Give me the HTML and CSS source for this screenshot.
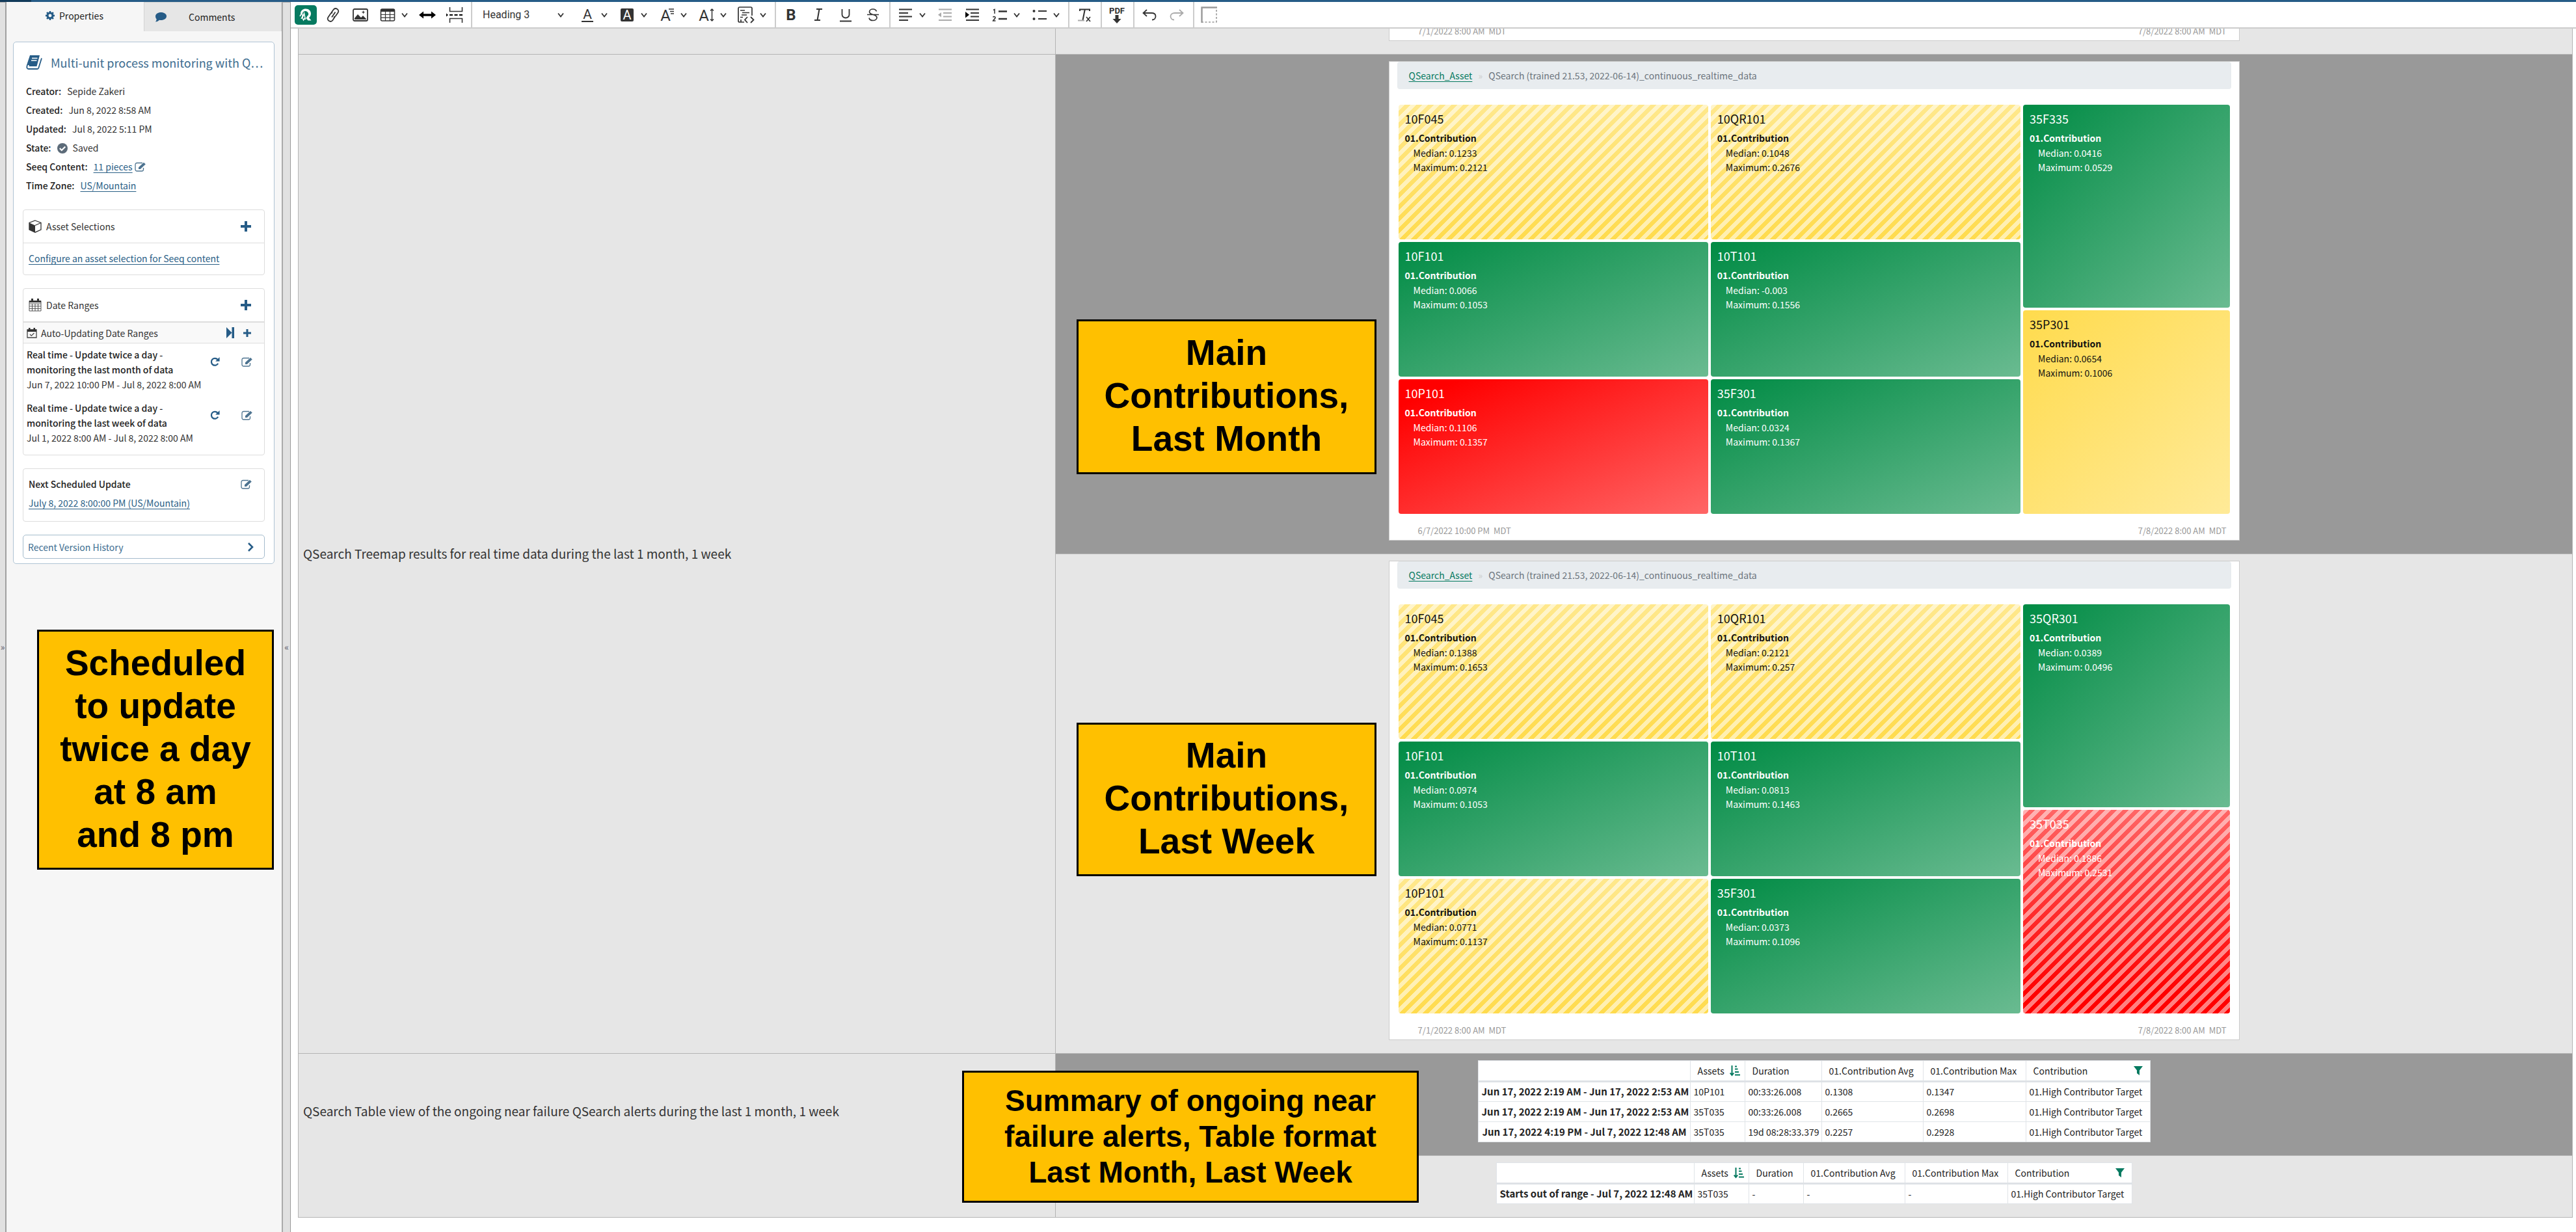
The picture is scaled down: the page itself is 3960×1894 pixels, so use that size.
FILE: index.html
```html
<!DOCTYPE html>
<html lang="en">
<head>
<meta charset="utf-8">
<title>Multi-unit process monitoring</title>
<link rel="stylesheet" href="styles.css">
</head>
<body>
<svg class="sprite" aria-hidden="true">
  <symbol id="chev" viewBox="0 0 10 8"><path d="M1 1.500l4 5 4-5" fill="none" stroke="currentColor" stroke-width="1.800"/></symbol>
  <symbol id="plus" viewBox="0 0 16 16"><path d="M6 0h4v6h6v4h-6v6H6v-6H0V6h6z" fill="currentColor"/></symbol>
  <symbol id="edit" viewBox="0 0 18 15"><path d="M12 1.500H3.500a2.500 2.500 0 0 0-2.500 2.500v7.500A2.500 2.500 0 0 0 3.500 14H11a2.500 2.500 0 0 0 2.500-2.500V9" fill="none" stroke="currentColor" stroke-width="1.300"/><path d="M6 11V8.200L14 .8l2.800 2.600L8.800 11z" fill="currentColor"/></symbol>
  <symbol id="redo-s" viewBox="0 0 16 16"><path d="M13 10.500A5.800 5.800 0 1 1 12.300 4" fill="none" stroke="currentColor" stroke-width="2.400"/><path d="M15.500 0v7H8.700z" fill="currentColor"/></symbol>
  <symbol id="sort" viewBox="0 0 17 17"><path d="M3.500 0v14M.7 11.500l2.800 3.500 2.800-3.500M8 1.500h3M8 5.500h4.500M8 10h6M8 14.500h8" fill="none" stroke="currentColor" stroke-width="2"/></symbol>
  <symbol id="filter" viewBox="0 0 14 14"><path d="M0 0h14L9 6.500V14l-4-3V6.500z" fill="currentColor"/></symbol>
</svg>

<div class="topbar"></div>
<div class="app">
  <div class="gutter gutter-left"><span>»</span></div>

  <aside class="sidebar">
    <div class="tabs">
      <button class="tab tab-active" type="button">
        <svg width="14" height="14" viewBox="0 0 16 16"><path fill="currentColor" fill-rule="evenodd" d="M6.700 0h2.600l.4 2.100 1.300.6 1.800-1.200 1.800 1.800L13.400 5l.5 1.300 2.100.4v2.600l-2.100.4-.5 1.300 1.200 1.800-1.800 1.800L11 13.400l-1.300.5-.4 2.100H6.700l-.4-2.100L5 13.400l-1.800 1.200-1.800-1.800L2.600 11l-.5-1.300L0 9.300V6.700l2.100-.4L2.600 5 1.400 3.200l1.800-1.800L5 2.700l1.300-.6zM8 5.200a2.800 2.800 0 1 0 0 5.600 2.800 2.800 0 0 0 0-5.600z"/></svg>
        <span>Properties</span>
      </button>
      <button class="tab tab-idle" type="button">
        <svg width="18" height="15" viewBox="0 0 18 15"><path fill="currentColor" d="M9.500 0C14.200 0 18 2.600 18 6s-3.800 6-8.500 6c-.9 0-1.700-.1-2.500-.3C5.500 13.200 3.500 14.300 1 14.500c1-1.200 1.600-2.600 1.700-4C1.600 9.300 1 7.800 1 6c0-3.400 3.800-6 8.500-6z"/></svg>
        <span>Comments</span>
      </button>
    </div>

    <section class="card">
      <h1 class="doc-title">
        <svg width="25" height="24" viewBox="0 0 25 24"><path d="M7 1h14l-4.500 17H4.500" fill="currentColor"/><path d="M7 1L1.500 17.500c-.6 3 .5 4.500 2.500 4.500h13.500c1 0 1.500-.5 1.800-1.500L24 5.500" fill="none" stroke="currentColor" stroke-width="1.800"/><path d="M7 1L2.500 16h3z" fill="currentColor"/><path d="M9 5.500h8.500M8 9h8.500" stroke="#fff" stroke-width="1.500"/></svg>
        <span>Multi-unit process monitoring with Q…</span>
      </h1>
      <dl class="facts">
        <div><dt>Creator:</dt><dd>Sepide Zakeri</dd></div>
        <div><dt>Created:</dt><dd>Jun 8, 2022 8:58 AM</dd></div>
        <div><dt>Updated:</dt><dd>Jul 8, 2022 5:11 PM</dd></div>
        <div><dt>State:</dt><dd><svg class="state" width="16" height="16" viewBox="0 0 16 16"><circle cx="8" cy="8" r="8" fill="#5c6b79"/><path d="M3.800 8l3 3 5.500-5.500" fill="none" stroke="#fff" stroke-width="2.200"/></svg>Saved</dd></div>
        <div><dt>Seeq Content:</dt><dd><a href="#">11 pieces</a><svg class="edit" width="18" height="15"><use href="#edit"/></svg></dd></div>
        <div><dt>Time Zone:</dt><dd><a href="#">US/Mountain</a></dd></div>
      </dl>

      <section class="box">
        <header class="box-head">
          <svg width="20" height="20" viewBox="0 0 20 20"><path d="M10 1l9 3.500V15l-9 4.200L1 15V4.500z" fill="#fff" stroke="#333" stroke-width="1.300"/><path d="M1 4.500L10 8.500v10.700L1 15z" fill="#333"/><path d="M10 8.500l9-4" stroke="#333" stroke-width="1.200"/></svg>
          <h2>Asset Selections</h2>
          <button class="icon-btn" type="button" aria-label="Add asset selection"><svg width="16" height="16"><use href="#plus"/></svg></button>
        </header>
        <div class="box-body"><a href="#">Configure an asset selection for Seeq content</a></div>
      </section>

      <section class="box">
        <header class="box-head">
          <svg width="20" height="20" viewBox="0 0 20 20"><path d="M1 3.500h18V19H1zM1 8h18M1 11.700h18M1 15.400h18M5.500 8v11M10 8v11M14.500 8v11" fill="none" stroke="#555" stroke-width="1"/><path d="M1 3.500h18V6H1zM4 0h3v5H4zM13 0h3v5h-3z" fill="#333"/></svg>
          <h2>Date Ranges</h2>
          <button class="icon-btn" type="button" aria-label="Add date range"><svg width="16" height="16"><use href="#plus"/></svg></button>
        </header>
        <div class="sub-head">
          <svg width="16" height="16" viewBox="0 0 16 16"><path d="M1 3h14v12H1z" fill="none" stroke="#444" stroke-width="1.300"/><path d="M1 2.500h14V6H1zM3 0h2.500v4H3zM10.500 0H13v4h-2.500z" fill="#333"/><path d="M5 10l2.300 2.200L11.500 8" fill="none" stroke="#444" stroke-width="1.200"/></svg>
          <h3>Auto-Updating Date Ranges</h3>
          <button class="icon-btn" type="button" aria-label="Step to now"><svg width="12" height="17" viewBox="0 0 12 17"><path d="M0 0l8.500 8.500L0 17zM8.500 0H12v17H8.500z" fill="currentColor"/></svg></button>
          <button class="icon-btn" type="button" aria-label="Add auto-updating range"><svg width="12" height="12"><use href="#plus"/></svg></button>
        </div>
        <ul class="ranges">
          <li>
            <div><strong>Real time - Update twice a day -<br>monitoring the last month of data</strong><span>Jun 7, 2022 10:00 PM - Jul 8, 2022 8:00 AM</span></div>
            <button class="icon-btn refresh" type="button" aria-label="Refresh"><svg width="15" height="15"><use href="#redo-s"/></svg></button>
            <button class="icon-btn" type="button" aria-label="Edit"><svg class="edit" width="18" height="15"><use href="#edit"/></svg></button>
          </li>
          <li>
            <div><strong>Real time - Update twice a day -<br>monitoring the last week of data</strong><span>Jul 1, 2022 8:00 AM - Jul 8, 2022 8:00 AM</span></div>
            <button class="icon-btn refresh" type="button" aria-label="Refresh"><svg width="15" height="15"><use href="#redo-s"/></svg></button>
            <button class="icon-btn" type="button" aria-label="Edit"><svg class="edit" width="18" height="15"><use href="#edit"/></svg></button>
          </li>
        </ul>
      </section>

      <section class="box next">
        <div><strong>Next Scheduled Update</strong><button class="icon-btn" type="button" aria-label="Edit schedule"><svg class="edit" width="18" height="15"><use href="#edit"/></svg></button></div>
        <a href="#">July 8, 2022 8:00:00 PM (US/Mountain)</a>
      </section>

      <button class="history" type="button"><span>Recent Version History</span><svg width="9" height="14" viewBox="0 0 9 14"><path d="M1 1l6 6-6 6" fill="none" stroke="currentColor" stroke-width="2.600"/></svg></button>
    </section>
  </aside>

  <div class="gutter gutter-mid"><span>«</span></div>

  <main class="main">
    <div class="toolbar">
      <div class="group">
        <button class="tool" type="button" aria-label="Insert Seeq content"><svg width="34" height="30" viewBox="0 0 34 30"><rect width="34" height="30" rx="5" fill="#067a60"/><path d="M9 13c0-5 4-7.500 8-7.500 5 0 8 3.500 8 7.500 0 3-1.500 5-3 6.200l3.500 4.300h-5l-3-3.500 2-3.500c1.500-1 2-2 1.500-4-.7-2-2.500-3.500-4.500-3.500-2.500 0-4 1.500-4.500 3.500z" fill="#fff"/><path d="M8 17l3-5 1.500 6 2-5.500 2 9.500M10 21l1.500-3 2 5 2-3" fill="none" stroke="#fff" stroke-width="1.500"/></svg></button>
        <button class="tool" type="button" aria-label="Link"><svg width="24" height="24" viewBox="0 0 24 24"><path d="M10 15.500l5.500-8M9 9l3.500-5c1.500-2 4-2.300 6-1s2.300 3.800 1 5.500l-3.500 5c-1 1.300-2 1.800-3.200 1.800M15 14.500L11.500 20c-1.500 2-4 2.300-6 1s-2.300-3.800-1-5.500L8 10.300c1-1.300 2-1.800 3.200-1.800" fill="none" stroke="currentColor" stroke-width="1.800"/></svg></button>
        <button class="tool" type="button" aria-label="Image"><svg width="24" height="20" viewBox="0 0 24 20"><rect x="1" y="1" width="22" height="18" rx="2" fill="none" stroke="currentColor" stroke-width="1.800"/><path d="M3 17V15l5-6 5 5 3-3 5 5v1zM16.500 3l.8 2 2 .8-2 .8-.8 2-.8-2-2-.8 2-.8z" fill="currentColor"/></svg></button>
        <button class="tool drop" type="button" aria-label="Table"><svg width="24" height="20" viewBox="0 0 24 20"><rect x="1.500" y="1" width="21" height="18" rx="2" fill="none" stroke="currentColor" stroke-width="1.600"/><path d="M2 1h20v4H2z" fill="currentColor"/><path d="M2 9.500h20M2 14.200h20M8.500 5v14M15.500 5v14" stroke="currentColor" stroke-width="1.200"/></svg><svg class="chev"><use href="#chev"/></svg></button>
        <button class="tool" type="button" aria-label="Width"><svg width="26" height="12" viewBox="0 0 26 12"><path d="M0 6l7-5.500v3.700h12V.5L26 6l-7 5.500V7.800H7v3.700z" fill="#000"/></svg></button>
        <button class="tool" type="button" aria-label="Page break"><svg width="26" height="24" viewBox="0 0 26 24"><path d="M5.500 0v6.500h19V0M5.500 24v-6.500h19V24" fill="none" stroke="currentColor" stroke-width="1.600"/><path d="M5 12h5M12.500 12h5M20 12h5" stroke="#000" stroke-width="2.200"/><path d="M0 9.500l3 2.500-3 2.500z" fill="#000"/></svg></button>
      </div>
      <div class="group">
        <label class="style-pick"><select aria-label="Paragraph format"><option>Heading 3</option></select><svg class="chev"><use href="#chev"/></svg></label>
        <button class="tool drop" type="button" aria-label="Text color"><svg width="24" height="24" viewBox="0 0 24 24"><text class="glyph" x="12" y="18" font-size="21">A</text><path d="M3 22h18" stroke="currentColor" stroke-width="2"/></svg><svg class="chev"><use href="#chev"/></svg></button>
        <button class="tool drop" type="button" aria-label="Background color"><svg width="24" height="24" viewBox="0 0 24 24"><rect x="2" y="2" width="20" height="20" rx="2" fill="currentColor"/><text class="glyph light" x="12" y="19" font-size="20">A</text></svg><svg class="chev"><use href="#chev"/></svg></button>
        <button class="tool drop" type="button" aria-label="Font family"><svg width="24" height="24" viewBox="0 0 24 24"><text class="glyph" x="10" y="21" font-size="24">A</text><path d="M15 3h8M17 6.500h6M18 10h5" stroke="currentColor" stroke-width="1.600"/></svg><svg class="chev"><use href="#chev"/></svg></button>
        <button class="tool drop" type="button" aria-label="Font size"><svg width="26" height="24" viewBox="0 0 26 24"><text class="glyph" x="9" y="21" font-size="24">A</text><path d="M21.500 3v18M19 5.500L21.500 3 24 5.500M19 18.500l2.500 2.500 2.500-2.500" fill="none" stroke="currentColor" stroke-width="1.500"/></svg><svg class="chev"><use href="#chev"/></svg></button>
        <button class="tool drop" type="button" aria-label="Code"><svg width="26" height="26" viewBox="0 0 26 26"><path d="M10 24H3a2 2 0 0 1-2-2M1 22V3a2 2 0 0 1 2-2h17a2 2 0 0 1 2 2v11M5 24v-4" fill="none" stroke="currentColor" stroke-width="1.700"/><path d="M4 6h7M7 9.500h11M6 13h8M4 16.500h4" stroke="currentColor" stroke-width="1.500"/><path d="M15 16l-4 4.500 4 4.500M20 16l4.500 4.500L20 25" fill="none" stroke="currentColor" stroke-width="1.800"/></svg><svg class="chev"><use href="#chev"/></svg></button>
      </div>
      <div class="group">
        <button class="tool" type="button" aria-label="Bold"><svg width="24" height="24" viewBox="0 0 24 24"><text class="glyph heavy" x="12" y="20" font-size="24">B</text></svg></button>
        <button class="tool" type="button" aria-label="Italic"><svg width="24" height="24" viewBox="0 0 24 24"><path d="M9 3h9M6 20h9M13.500 3l-3 17" stroke="currentColor" stroke-width="2"/></svg></button>
        <button class="tool" type="button" aria-label="Underline"><svg width="24" height="24" viewBox="0 0 24 24"><path d="M6.500 3v8.500a5.500 5 0 0 0 11 0V3M3 21.500h18" fill="none" stroke="currentColor" stroke-width="1.800"/></svg></button>
        <button class="tool" type="button" aria-label="Strikethrough"><svg width="24" height="24" viewBox="0 0 24 24"><path d="M17.500 6.500C16.500 4 14.500 3 12 3 9 3 6.500 4.500 6.500 7.200c0 5.300 11.500 3.300 11.500 8.800 0 3-3 4.500-6 4.500S6.500 19 6 16.500M3 11.500h18" fill="none" stroke="currentColor" stroke-width="1.700"/></svg></button>
      </div>
      <div class="group">
        <button class="tool drop" type="button" aria-label="Align"><svg width="22" height="20" viewBox="0 0 22 20"><path d="M1 1.500h20M1 7h14M1 12.500h20M1 18h14" stroke="currentColor" stroke-width="2"/></svg><svg class="chev"><use href="#chev"/></svg></button>
        <button class="tool faded" type="button" aria-label="Outdent"><svg width="22" height="20" viewBox="0 0 22 20"><path d="M1 1.500h20M8 7h13M8 12.500h13M1 18h20" stroke="currentColor" stroke-width="1.800"/><path d="M5 6v7.500L0 9.800z" fill="currentColor"/></svg></button>
        <button class="tool" type="button" aria-label="Indent"><svg width="22" height="20" viewBox="0 0 22 20"><path d="M1 1.500h20M8 7h13M8 12.500h13M1 18h20" stroke="currentColor" stroke-width="2"/><path d="M0 5v9.500l6-4.700z" fill="#000"/></svg></button>
        <button class="tool drop" type="button" aria-label="Numbered list"><svg width="24" height="20" viewBox="0 0 24 20"><path d="M10 4.500h13M10 16h13" stroke="currentColor" stroke-width="2.400"/><path d="M2 2.500l2-1V8M1.500 13.500c1-1.500 4-1 3.500 1-.3 1.500-3 3-3.500 4.500h4" fill="none" stroke="currentColor" stroke-width="1.500"/></svg><svg class="chev"><use href="#chev"/></svg></button>
        <button class="tool drop" type="button" aria-label="Bulleted list"><svg width="22" height="20" viewBox="0 0 22 20"><path d="M9 4h13M9 16h13" stroke="currentColor" stroke-width="2"/><circle cx="2.500" cy="4" r="2" fill="currentColor"/><circle cx="2.500" cy="16" r="2" fill="currentColor"/></svg><svg class="chev"><use href="#chev"/></svg></button>
      </div>
      <div class="group">
        <button class="tool" type="button" aria-label="Clear formatting"><svg width="24" height="24" viewBox="0 0 24 24"><path d="M5 6V3.500h15V6M12.800 3.500L9.500 20" fill="none" stroke="currentColor" stroke-width="2"/><path d="M2 20.500h10" stroke="#aaa" stroke-width="2"/><path d="M15 15l6 7M21 15l-6 7" stroke="currentColor" stroke-width="1.700"/></svg></button>
      </div>
      <div class="group">
        <button class="tool" type="button" aria-label="Export PDF"><svg width="28" height="28" viewBox="0 0 28 28"><text class="glyph heavy" x="14" y="12" font-size="13">PDF</text><path d="M11.500 14h5v6h4L14 27l-6.500-7h4z" fill="currentColor"/></svg></button>
      </div>
      <div class="group">
        <button class="tool" type="button" aria-label="Undo"><svg width="22" height="18" viewBox="0 0 22 18"><path d="M7 1L1.500 6 7 11M2 6h12c4 0 6.500 2 6.500 5s-2 5.500-5.500 5.500" fill="none" stroke="currentColor" stroke-width="1.800"/></svg></button>
        <button class="tool faded" type="button" aria-label="Redo"><svg width="22" height="18" viewBox="0 0 22 18"><path d="M15 1l5.500 5-5.500 5M20 6H8c-4 0-6.500 2-6.500 5s2 5.500 5.500 5.500" fill="none" stroke="currentColor" stroke-width="1.800"/></svg></button>
      </div>
      <div class="group last">
        <button class="tool" type="button" aria-label="Show borders"><svg width="26" height="26" viewBox="0 0 26 26"><path d="M1.500 25V1.500H25" fill="none" stroke="#999" stroke-width="2.400"/><path d="M24 5v20M1 24h23" fill="none" stroke="#999" stroke-width="1.600" stroke-dasharray="3 2.500"/></svg></button>
      </div>
    </div>

    <div class="page">
      <table class="doc">
        <colgroup><col class="col-text"><col></colgroup>
        <tbody>
          <tr>
            <td></td>
            <td class="cut"><div class="chart chart-cut"><footer class="span-dates"><span>7/1/2022 8:00 AM &nbsp;MDT</span><span>7/8/2022 8:00 AM &nbsp;MDT</span></footer></div></td>
          </tr>
          <tr>
            <td class="note" rowspan="2">QSearch Treemap results for real time data during the last 1 month, 1 week</td>
            <td class="media dark">
              <div class="chart">
                <nav class="crumbs"><a href="#">QSearch_Asset</a><i>»</i><span>QSearch (trained 21.53, 2022-06-14)_continuous_realtime_data</span></nav>
                <div class="treemap">
                  <article class="tile yellow hatch"><h4>10F045</h4><h5>01.Contribution</h5><p>Median: 0.1233</p><p>Maximum: 0.2121</p></article>
                  <article class="tile yellow hatch"><h4>10QR101</h4><h5>01.Contribution</h5><p>Median: 0.1048</p><p>Maximum: 0.2676</p></article>
                  <article class="tile green tall"><h4>35F335</h4><h5>01.Contribution</h5><p>Median: 0.0416</p><p>Maximum: 0.0529</p></article>
                  <article class="tile green"><h4>10F101</h4><h5>01.Contribution</h5><p>Median: 0.0066</p><p>Maximum: 0.1053</p></article>
                  <article class="tile green"><h4>10T101</h4><h5>01.Contribution</h5><p>Median: -0.003</p><p>Maximum: 0.1556</p></article>
                  <article class="tile yellow tall"><h4>35P301</h4><h5>01.Contribution</h5><p>Median: 0.0654</p><p>Maximum: 0.1006</p></article>
                  <article class="tile red"><h4>10P101</h4><h5>01.Contribution</h5><p>Median: 0.1106</p><p>Maximum: 0.1357</p></article>
                  <article class="tile green"><h4>35F301</h4><h5>01.Contribution</h5><p>Median: 0.0324</p><p>Maximum: 0.1367</p></article>
                </div>
                <footer class="span-dates"><span>6/7/2022 10:00 PM &nbsp;MDT</span><span>7/8/2022 8:00 AM &nbsp;MDT</span></footer>
              </div>
            </td>
          </tr>
          <tr>
            <td class="media">
              <div class="chart">
                <nav class="crumbs"><a href="#">QSearch_Asset</a><i>»</i><span>QSearch (trained 21.53, 2022-06-14)_continuous_realtime_data</span></nav>
                <div class="treemap">
                  <article class="tile yellow hatch"><h4>10F045</h4><h5>01.Contribution</h5><p>Median: 0.1388</p><p>Maximum: 0.1653</p></article>
                  <article class="tile yellow hatch"><h4>10QR101</h4><h5>01.Contribution</h5><p>Median: 0.2121</p><p>Maximum: 0.257</p></article>
                  <article class="tile green tall"><h4>35QR301</h4><h5>01.Contribution</h5><p>Median: 0.0389</p><p>Maximum: 0.0496</p></article>
                  <article class="tile green"><h4>10F101</h4><h5>01.Contribution</h5><p>Median: 0.0974</p><p>Maximum: 0.1053</p></article>
                  <article class="tile green"><h4>10T101</h4><h5>01.Contribution</h5><p>Median: 0.0813</p><p>Maximum: 0.1463</p></article>
                  <article class="tile red hatch tall"><h4>35T035</h4><h5>01.Contribution</h5><p>Median: 0.1886</p><p>Maximum: 0.2531</p></article>
                  <article class="tile yellow hatch"><h4>10P101</h4><h5>01.Contribution</h5><p>Median: 0.0771</p><p>Maximum: 0.1137</p></article>
                  <article class="tile green"><h4>35F301</h4><h5>01.Contribution</h5><p>Median: 0.0373</p><p>Maximum: 0.1096</p></article>
                </div>
                <footer class="span-dates"><span>7/1/2022 8:00 AM &nbsp;MDT</span><span>7/8/2022 8:00 AM &nbsp;MDT</span></footer>
              </div>
            </td>
          </tr>
          <tr>
            <td class="note raised" rowspan="2">QSearch Table view of the ongoing near failure QSearch alerts during the last 1 month, 1 week</td>
            <td class="media dark">
              <table class="data">
                <colgroup><col class="w-when"><col class="w-asset"><col class="w-dur"><col class="w-avg"><col class="w-max"><col class="w-con"></colgroup>
                <thead><tr><td></td><th scope="col">Assets<svg class="sort"><use href="#sort"/></svg></th><th scope="col">Duration</th><th scope="col">01.Contribution Avg</th><th scope="col">01.Contribution Max</th><th scope="col">Contribution<svg class="filter"><use href="#filter"/></svg></th></tr></thead>
                <tbody>
                  <tr><th scope="row">Jun 17, 2022 2:19 AM - Jun 17, 2022 2:53 AM</th><td>10P101</td><td>00:33:26.008</td><td>0.1308</td><td>0.1347</td><td>01.High Contributor Target</td></tr>
                  <tr><th scope="row">Jun 17, 2022 2:19 AM - Jun 17, 2022 2:53 AM</th><td>35T035</td><td>00:33:26.008</td><td>0.2665</td><td>0.2698</td><td>01.High Contributor Target</td></tr>
                  <tr><th scope="row">Jun 17, 2022 4:19 PM - Jul 7, 2022 12:48 AM</th><td>35T035</td><td>19d 08:28:33.379</td><td>0.2257</td><td>0.2928</td><td>01.High Contributor Target</td></tr>
                </tbody>
              </table>
            </td>
          </tr>
          <tr>
            <td class="media">
              <table class="data">
                <colgroup><col class="w-open"><col class="w-asset"><col class="w-asset"><col class="w-avg"><col class="w-max"><col class="w-con"></colgroup>
                <thead><tr><td></td><th scope="col">Assets<svg class="sort"><use href="#sort"/></svg></th><th scope="col">Duration</th><th scope="col">01.Contribution Avg</th><th scope="col">01.Contribution Max</th><th scope="col">Contribution<svg class="filter"><use href="#filter"/></svg></th></tr></thead>
                <tbody>
                  <tr><th scope="row">Starts out of range - Jul 7, 2022 12:48 AM</th><td>35T035</td><td>-</td><td>-</td><td>-</td><td>01.High Contributor Target</td></tr>
                </tbody>
              </table>
            </td>
          </tr>
        </tbody>
      </table>
    </div>
  </main>
</div>

<div class="callout c-schedule">Scheduled<br>to update<br>twice a day<br>at 8 am<br>and 8 pm</div>
<div class="callout c-month">Main<br>Contributions,<br>Last Month</div>
<div class="callout c-week">Main<br>Contributions,<br>Last Week</div>
<div class="callout c-summary">Summary of ongoing near<br>failure alerts, Table format<br>Last Month, Last Week</div>
</body>
</html>
```
FILE: styles.css
```css
* { box-sizing: border-box; }
body {
  margin: 0;
  min-height: 100vh;
  position: relative;
  display: flex;
  flex-direction: column;
  background: #fff;
  color: #333;
  font: 14px/24px "Noto Sans CJK SC", "Noto Sans", sans-serif;
}
h1, h2, h3, h4, h5, p, dl, dd, ul { margin: 0; padding: 0; font: inherit; }
button, select { font: inherit; color: inherit; background: none; border: 0; padding: 0; }
a { color: #2a6086; text-decoration: underline; text-underline-offset: 3px; }
svg { display: block; flex: none; overflow: visible; }
.sprite { position: absolute; width: 0; height: 0; overflow: hidden; }

.topbar { height: 3px; background: linear-gradient(90deg, #123a5a 48px, #265c87 48px); }
.app { flex: 1; display: flex; }

/* collapsible gutters */
.gutter {
  flex: none;
  display: flex;
  align-items: center;
  justify-content: center;
  background: #e1e1e1;
  border-top: 1px solid #aaa;
  color: #556;
  font-size: 14px;
}
.gutter span { margin-top: 90px; }
.gutter-left { width: 10px; border-right: 2px solid #a0a0a0; }
.gutter-mid { width: 14px; border-left: 2px solid #aaa; border-right: 1px solid #999; }

/* sidebar */
.sidebar { width: 423px; flex: none; background: #f6f6f6; }
.tabs { display: flex; height: 45px; color: #222; }
.tab { display: flex; align-items: center; height: 45px; }
.tab svg { color: #265c87; }
.tab-active { width: 211px; padding: 0 0 4px 60px; gap: 7px; }
.tab-idle { flex: 1; padding-left: 16px; gap: 34px; background: #e6e6e6; border: solid #d4d4d4; border-width: 1px 1px 0 1px; }

.card {
  margin: 16px 11px 0 10px;
  padding: 13px 14px 7px;
  background: #fff;
  border: 1px solid #afc4d4;
  border-radius: 5px;
}
.doc-title { display: flex; align-items: center; gap: 13px; height: 36px; padding-left: 5px; font-size: 18px; color: #3d6d90; white-space: nowrap; }
.doc-title svg { color: #265c87; }
.facts { padding: 12px 5px 0; }
.facts div { display: flex; gap: 9px; line-height: 29px; }
.facts dt { font-weight: 500; color: #222; }
.facts dd { display: flex; align-items: center; }
.facts .edit { margin-left: 3px; }
.state { margin-right: 8px; }
.edit { color: #4d7390; }

.box { margin-bottom: 20px; border: 1px solid #ddd; border-radius: 4px; }
.facts + .box { margin-top: 22px; }
.box-head { display: flex; align-items: center; gap: 7px; height: 50px; padding: 0 20px 0 8px; }
.box-head h2 { flex: 1; }
.box-body { height: 49px; padding: 11px 8px 0; border-top: 1px solid #ddd; }
.icon-btn { color: #265c87; }
.sub-head { display: flex; align-items: center; gap: 6px; height: 34px; padding: 0 20px 0 5px; background: #f9f9f9; border-top: 2px solid #ddd; border-bottom: 1px solid #ddd; }
.sub-head h3 { flex: 1; }
.sub-head .icon-btn + .icon-btn { margin-left: 8px; }
.ranges { list-style: none; padding: 6px 16px 12px 5px; }
.ranges li { display: flex; align-items: flex-start; height: 82px; white-space: nowrap; }
.ranges li + li { height: 71px; }
.ranges div { width: 282px; flex: none; }
.ranges strong, .ranges span { display: block; line-height: 23px; }
.ranges strong, .next strong { font-weight: 500; color: #222; }
.ranges .icon-btn { padding-top: 15px; }
.ranges .refresh { width: 48px; }
.next { height: 82px; padding: 11px 18px 0 8px; }
.next div { display: flex; justify-content: space-between; align-items: center; }
.next a { line-height: 35px; }
.history { display: flex; align-items: center; justify-content: space-between; width: 100%; height: 37px; padding: 0 16px 0 7px; border: 1px solid #a5bccd; border-radius: 5px; color: #3d6d90; }
.history svg { color: #265c87; }

/* editor toolbar */
.main { flex: 1; min-width: 0; }
.toolbar { display: flex; height: 41px; border-bottom: 2px solid #ccc; color: #333; }
.group { display: flex; align-items: center; padding: 0 4px 0 2px; border-right: 2px solid #ccc; }
.last { border-right: 0; }
.tool { display: flex; align-items: center; justify-content: center; width: 42px; height: 38px; }
.drop { display: grid; grid-template-columns: 42px 10px; justify-content: start; justify-items: center; width: 61px; }
.chev { width: 10px; height: 8px; }
.faded { color: #aaa; }
.glyph { text-anchor: middle; fill: currentColor; font-family: Roboto, sans-serif; }
.light { fill: #fff; }
.heavy { font-weight: 700; }
.style-pick { display: flex; align-items: center; width: 154px; padding: 0 15px 0 14px; }
.style-pick select { flex: 1; appearance: none; font-size: 16px; font-family: Roboto, sans-serif; outline: 0; }

/* document */
.page { padding: 0 5px 22px 11px; }
.doc { width: 100%; table-layout: fixed; border-collapse: collapse; background: #e6e6e6; }
.doc > tbody > tr > td { border: 1px solid #b4b4b4; }
.doc > tbody > tr:first-child > td { border-top: 0; height: 39px; padding: 0; vertical-align: top; }
.col-text { width: 33.3%; }
.note { padding: 0 7px; font-size: 19px; vertical-align: middle; }
.raised { padding-bottom: 74px; }
.media { padding: 10px 10px 20px; vertical-align: top; }
.dark { background: #999; }

.chart { max-width: 1308px; margin: 0 auto; background: #fff; border: 1px solid #ccc; }
.chart-cut { display: flex; align-items: flex-end; height: 19px; overflow: hidden; border-top: 0; }
.crumbs { display: flex; height: 42px; margin: 0 12px 24px; padding: 0 18px; line-height: 42px; background: #e8ecef; border-radius: 4px; color: #6c757d; }
.crumbs a { color: #067a60; }
.crumbs i { width: 25px; text-align: center; font-style: normal; color: #ccc; }
.treemap {
  display: grid;
  grid-template-columns: 3fr 3fr 2fr;
  grid-template-rows: repeat(6, 1fr);
  grid-auto-flow: row dense;
  gap: 4px;
  height: 629px;
  margin: 0 14px;
}
.tile { grid-row: span 2; padding: 8px 10px; border-radius: 4px; color: #fff; line-height: 22px; }
.tall { grid-row: span 3; grid-column: 3; }
.tile h4 { font-size: 18px; line-height: 26px; }
.tile h5 { font-weight: 700; line-height: 24px; margin: 5px 0 0; }
.tile p { padding-left: 13px; }
.green { background: linear-gradient(to bottom right, #008b44, #6abb91); }
.red { background: linear-gradient(to bottom right, #f00 10%, #f66); }
.yellow { color: #111; background: linear-gradient(to bottom right, #ffdb4d, #ffea98); }
.hatch { background-size: 18px 18px, auto; }
.yellow.hatch { background-image: linear-gradient(135deg, #ffffff8c 25%, transparent 25% 50%, #ffffff8c 50% 75%, transparent 75%), linear-gradient(#ffe88c, #ffdb4d); }
.red.hatch { background-image: linear-gradient(135deg, #ffffff80 25%, transparent 25% 50%, #ffffff80 50% 75%, transparent 75%), linear-gradient(#f66, #f00 90%); }
.span-dates { display: flex; justify-content: space-between; flex: 1; height: 40px; padding: 14px 19px 0 44px; line-height: 24px; font-size: 13px; color: #999; }

/* data tables */
.data { margin: 0 auto; table-layout: fixed; width: 1px; border-collapse: collapse; background: #fff; color: #222; white-space: nowrap; }
.data th, .data td { height: 31px; padding: 0 5px; border: 1px solid #e0e4e8; text-align: left; font-weight: 400; line-height: 20px; }
.data thead th { height: 32px; padding: 0 11px; border-bottom: 3px solid #dee2e6; }
.data thead td { border-bottom: 3px solid #dee2e6; }
.data tbody th { font-size: 15px; font-weight: 700; text-align: right; }
.data svg { display: inline-block; float: right; color: #067a60; }
.data .sort { width: 17px; height: 17px; margin: 2px -5px 0 0; }
.data .filter { width: 14px; height: 14px; margin-top: 3px; }
.w-when { width: 326px; }
.w-open { width: 304px; }
.w-asset { width: 84px; }
.w-dur { width: 118px; }
.w-avg { width: 156px; }
.w-max { width: 158px; }
.w-con { width: 191px; }

/* annotations laid over the document */
.callout {
  position: absolute;
  display: flex;
  align-items: center;
  justify-content: center;
  padding-bottom: 4px;
  border: 3px solid #000;
  background: #ffc000;
  color: #000;
  text-align: center;
  font: 700 55px/66px "Liberation Sans", Arial, sans-serif;
}
.c-schedule { left: 57px; top: 968px; width: 364px; height: 369px; }
.c-month { left: 1655px; top: 491px; width: 461px; height: 238px; }
.c-week { left: 1655px; top: 1111px; width: 461px; height: 236px; }
.c-summary { left: 1479px; top: 1646px; width: 702px; height: 203px; padding-bottom: 0; font-size: 46px; line-height: 55px; }
```
